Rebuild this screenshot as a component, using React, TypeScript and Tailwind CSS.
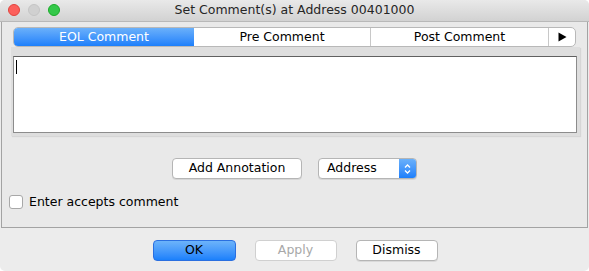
import React from 'react';

const font = { fontFamily: '"DejaVu Sans", "Liberation Sans", sans-serif' };

function TrafficLights() {
  return (
    <div className="absolute left-[8px] top-[4px] flex gap-[8px]">
      <span className="h-[12px] w-[12px] rounded-full border border-[#e0443e] bg-[#fc605c]" />
      <span className="h-[12px] w-[12px] rounded-full border border-[#c4c4c4] bg-[#d0d0d0]" />
      <span className="h-[12px] w-[12px] rounded-full border border-[#1aab29] bg-[#34c84a]" />
    </div>
  );
}

function PushButton({ label, width, primary = false, disabled = false }: { label: string; width: string; primary?: boolean; disabled?: boolean }) {
  if (primary) {
    return (
      <button className={`${width} h-[21px] rounded-[4px] border border-[#2a6fe0] bg-gradient-to-b from-[#6cb3fa] to-[#1a80fb] text-[12.5px] text-black leading-none`}>
        {label}
      </button>
    );
  }
  return (
    <button
      className={`${width} h-[21px] rounded-[4px] border bg-white text-[12.5px] leading-none ${
        disabled ? 'border-[#d0d0d0] bg-[#f5f5f5] text-[#a8a8a8]' : 'border-[#b5b5b5] text-black shadow-[0_1px_0_rgba(0,0,0,0.08)]'
      }`}
    >
      {label}
    </button>
  );
}

export default function App() {
  return (
    <div className="flex h-[271px] w-[589px] flex-col overflow-hidden rounded-[5px] bg-[#ececec]" style={font}>
      {/* 标题栏 */}
      <div className="relative flex h-[22px] items-center justify-center bg-gradient-to-b from-[#e9e9e9] to-[#d2d2d2] border-b border-[#b8b8b8]">
        <TrafficLights />
        <span className="text-[12.5px] text-[#262626]">Set Comment(s) at Address 00401000</span>
      </div>

      {/* 主面板 */}
      <div className="ml-[1px] mr-[1px] flex h-[206px] flex-col border-x border-b border-[#a3a3a3] bg-[#e9e9e9] pt-[5px]">
        {/* 标签栏 */}
        <div className="ml-[11px] flex h-[20px] w-[563px] overflow-hidden rounded-[5px] border border-[#b8b8b8] bg-white text-[12.5px]">
          <div className="flex w-[180px] items-center justify-center bg-gradient-to-b from-[#6ab0fa] to-[#1b7ffb] text-white">
            EOL Comment
          </div>
          <div className="flex w-[177px] items-center justify-center border-r border-[#c8c8c8] text-black">Pre Comment</div>
          <div className="flex w-[178px] items-center justify-center border-r border-[#c8c8c8] text-black">Post Comment</div>
          <div className="flex flex-1 items-center justify-center">
            <svg width="9" height="10" viewBox="0 0 9 10">
              <path d="M0.5 0.5 L8.5 5 L0.5 9.5 Z" fill="black" />
            </svg>
          </div>
        </div>

        {/* 标签内容 */}
        <div className="ml-[9px] w-[569px] bg-[#dedede] px-[2px] pb-[3px] pt-[9px] shadow-[1px_1px_1px_rgba(0,0,0,0.08)]">
          <div className="relative h-[77px] w-[564px] border border-[#8c8c8c] border-t-[#606060] bg-white">
            <span className="absolute left-[2px] top-[3px] h-[14px] w-[1px] bg-black" />
          </div>
        </div>

        {/* 按钮行 */}
        <div className="mt-[22px] flex justify-center gap-[16px]">
          <PushButton label="Add Annotation" width="w-[130px]" />
          <div className="flex h-[21px] w-[99px] overflow-hidden rounded-[4px] border border-[#b5b5b5] bg-white shadow-[0_1px_0_rgba(0,0,0,0.08)]">
            <span className="flex flex-1 items-center pl-[8px] text-[12.5px] text-black">Address</span>
            <span className="flex w-[17px] flex-col items-center justify-center bg-gradient-to-b from-[#6ab0fa] to-[#1b7ffb]">
              <svg width="7" height="12" viewBox="0 0 7 12" fill="none" stroke="white" strokeWidth="1.3">
                <path d="M1 4.5 L3.5 2 L6 4.5" />
                <path d="M1 7.5 L3.5 10 L6 7.5" />
              </svg>
            </span>
          </div>
        </div>

        {/* 复选框 */}
        <label className="ml-[7px] mt-[14px] flex items-center gap-[6px] text-[12.5px] text-black">
          <span className="h-[14px] w-[14px] rounded-[3px] border border-[#a8a8a8] bg-white" />
          Enter accepts comment
        </label>
      </div>

      {/* 底部按钮 */}
      <div className="mt-[12px] flex justify-center gap-[19px] pl-[1px]">
        <PushButton label="OK" width="w-[83px]" primary />
        <PushButton label="Apply" width="w-[82px]" disabled />
        <PushButton label="Dismiss" width="w-[82px]" />
      </div>
    </div>
  );
}
